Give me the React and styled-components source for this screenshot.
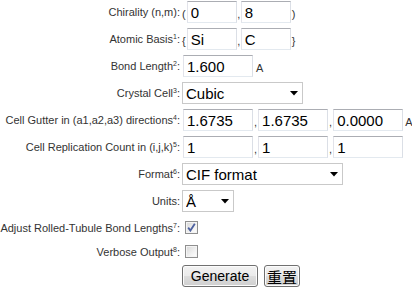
import React from "react";
import styled, { createGlobalStyle } from "styled-components";

const Global = createGlobalStyle`
  html, body { margin: 0; padding: 0; background: #fff; }
  body { font-family: "Liberation Sans", Arial, sans-serif; }
`;

const Form = styled.form`
  display: flex;
  flex-direction: column;
  gap: 5px;
  padding-top: 1px;
  width: 412px;
`;

const Row = styled.div`
  display: flex;
  align-items: center;
  height: ${(p) => p.$h || 22}px;
  margin-top: ${(p) => p.$mt || 0}px;
`;

const Label = styled.label`
  width: 180px;
  flex: none;
  text-align: right;
  font-size: 11px;
  color: #333;
  white-space: nowrap;
`;

const Sup = styled.sup`
  font-size: 7px;
  vertical-align: 4px;
  line-height: 0;
`;

const Field = styled.div`
  display: flex;
  align-items: baseline;
  padding-left: ${(p) => p.$pl ?? 3}px;
`;

const Punct = styled.span`
  font-size: 11px;
  color: #333;
  padding: 0 ${(p) => p.$pad ?? 1}px;
`;

const TextInput = styled.input`
  box-sizing: border-box;
  width: ${(p) => p.$w}px;
  height: 22px;
  margin: 0;
  padding: 1px 3px 0;
  border: 1px solid;
  border-color: #abadb3 #dbdfe6 #e3e9ef #e2e3ea;
  background: #fff;
  font-family: "Liberation Sans", Arial, sans-serif;
  font-size: 15px;
  color: #000;
  outline: none;
`;

const SelectWrap = styled.div`
  position: relative;
  width: ${(p) => p.$w}px;
  height: 22px;
`;

const Select = styled.select`
  appearance: none;
  -webkit-appearance: none;
  box-sizing: border-box;
  width: 100%;
  height: 22px;
  margin: 0;
  padding: 1px 3px 0;
  border: 1px solid #c9c9c9;
  border-radius: 0;
  background: #fff;
  font-family: "Liberation Sans", Arial, sans-serif;
  font-size: 15px;
  color: #000;
  outline: none;
`;

const Arrow = styled.svg`
  position: absolute;
  right: 5px;
  top: 9px;
  pointer-events: none;
`;

const CheckBox = styled.span`
  box-sizing: border-box;
  display: inline-flex;
  align-items: center;
  justify-content: center;
  width: 13px;
  height: 13px;
  margin-left: 5px;
  border: 1px solid #8f8f8f;
  background: linear-gradient(135deg, #d6d6d6 0%, #f1f1f1 60%, #ffffff 100%);
  box-shadow: inset 0 0 0 1px #f4f4f4;
`;

const Buttons = styled.div`
  display: flex;
  gap: 6px;
  padding-left: 2px;
`;

const Button = styled.button`
  box-sizing: border-box;
  width: ${(p) => p.$w}px;
  height: 22px;
  margin: 0;
  padding: 0;
  border: 1px solid #707070;
  border-radius: 3px;
  background: linear-gradient(#f2f2f2 0%, #ebebeb 48%, #dddddd 52%, #cfcfcf 100%);
  box-shadow: inset 0 0 0 1px #fcfcfc;
  font-family: "Liberation Sans", "Noto Sans CJK SC", Arial, sans-serif;
  font-size: ${(p) => p.$fs || 14}px;
  color: #000;
`;

function Dropdown({ w, value, options }) {
  return (
    <SelectWrap $w={w}>
      <Select defaultValue={value}>
        {options.map((o) => (
          <option key={o}>{o}</option>
        ))}
      </Select>
      <Arrow width="8" height="5" viewBox="0 0 8 5">
        <path d="M0 0 H8 L4 4.5 Z" fill="#000" />
      </Arrow>
    </SelectWrap>
  );
}

export default function App() {
  return (
    <>
      <Global />
      <Form onSubmit={(e) => e.preventDefault()}>
        <Row>
          <Label>Chirality (n,m):</Label>
          <Field $pl={1}>
            <Punct>(</Punct>
            <TextInput $w={50} defaultValue="0" />
            <Punct $pad={0.5}>,</Punct>
            <TextInput $w={50} defaultValue="8" />
            <Punct>)</Punct>
          </Field>
        </Row>
        <Row>
          <Label>
            Atomic Basis<Sup>1</Sup>:
          </Label>
          <Field $pl={1}>
            <Punct>{"{"}</Punct>
            <TextInput $w={50} defaultValue="Si" />
            <Punct $pad={0.5}>,</Punct>
            <TextInput $w={50} defaultValue="C" />
            <Punct>{"}"}</Punct>
          </Field>
        </Row>
        <Row>
          <Label>
            Bond Length<Sup>2</Sup>:
          </Label>
          <Field>
            <TextInput $w={70} defaultValue="1.600" />
            <Punct $pad={3}>A</Punct>
          </Field>
        </Row>
        <Row>
          <Label>
            Crystal Cell<Sup>3</Sup>:
          </Label>
          <Field $pl={2}>
            <Dropdown w={121} value="Cubic" options={["Cubic", "Hexagonal"]} />
          </Field>
        </Row>
        <Row>
          <Label>
            Cell Gutter in (a1,a2,a3) directions<Sup>4</Sup>:
          </Label>
          <Field>
            <TextInput $w={70} defaultValue="1.6735" />
            <Punct>,</Punct>
            <TextInput $w={70} defaultValue="1.6735" />
            <Punct>,</Punct>
            <TextInput $w={70} defaultValue="0.0000" />
            <Punct $pad={2}>A</Punct>
          </Field>
        </Row>
        <Row>
          <Label>
            Cell Replication Count in (i,j,k)<Sup>5</Sup>:
          </Label>
          <Field>
            <TextInput $w={70} defaultValue="1" />
            <Punct>,</Punct>
            <TextInput $w={70} defaultValue="1" />
            <Punct>,</Punct>
            <TextInput $w={70} defaultValue="1" />
          </Field>
        </Row>
        <Row>
          <Label>
            Format<Sup>6</Sup>:
          </Label>
          <Field $pl={2}>
            <Dropdown w={161} value="CIF format" options={["CIF format", "XYZ format", "PDB format"]} />
          </Field>
        </Row>
        <Row>
          <Label>Units:</Label>
          <Field $pl={2}>
            <Dropdown w={52} value="Å" options={["Å", "nm", "Bohr"]} />
          </Field>
        </Row>
        <Row $h={21}>
          <Label>
            Adjust Rolled-Tubule Bond Lengths<Sup>7</Sup>:
          </Label>
          <CheckBox role="checkbox" aria-checked="true">
            <svg width="9" height="9" viewBox="0 0 9 9">
              <path d="M1.2 4.6 L3.4 7.6 L7.8 0.8" fill="none" stroke="#4d61a0" strokeWidth="1.8" />
            </svg>
          </CheckBox>
        </Row>
        <Row $h={21} $mt={-2}>
          <Label>
            Verbose Output<Sup>8</Sup>:
          </Label>
          <CheckBox role="checkbox" aria-checked="false" />
        </Row>
        <Row $mt={-2}>
          <Label />
          <Buttons>
            <Button $w={76} type="submit">Generate</Button>
            <Button $w={36} $fs={15} type="reset">重置</Button>
          </Buttons>
        </Row>
      </Form>
    </>
  );
}
